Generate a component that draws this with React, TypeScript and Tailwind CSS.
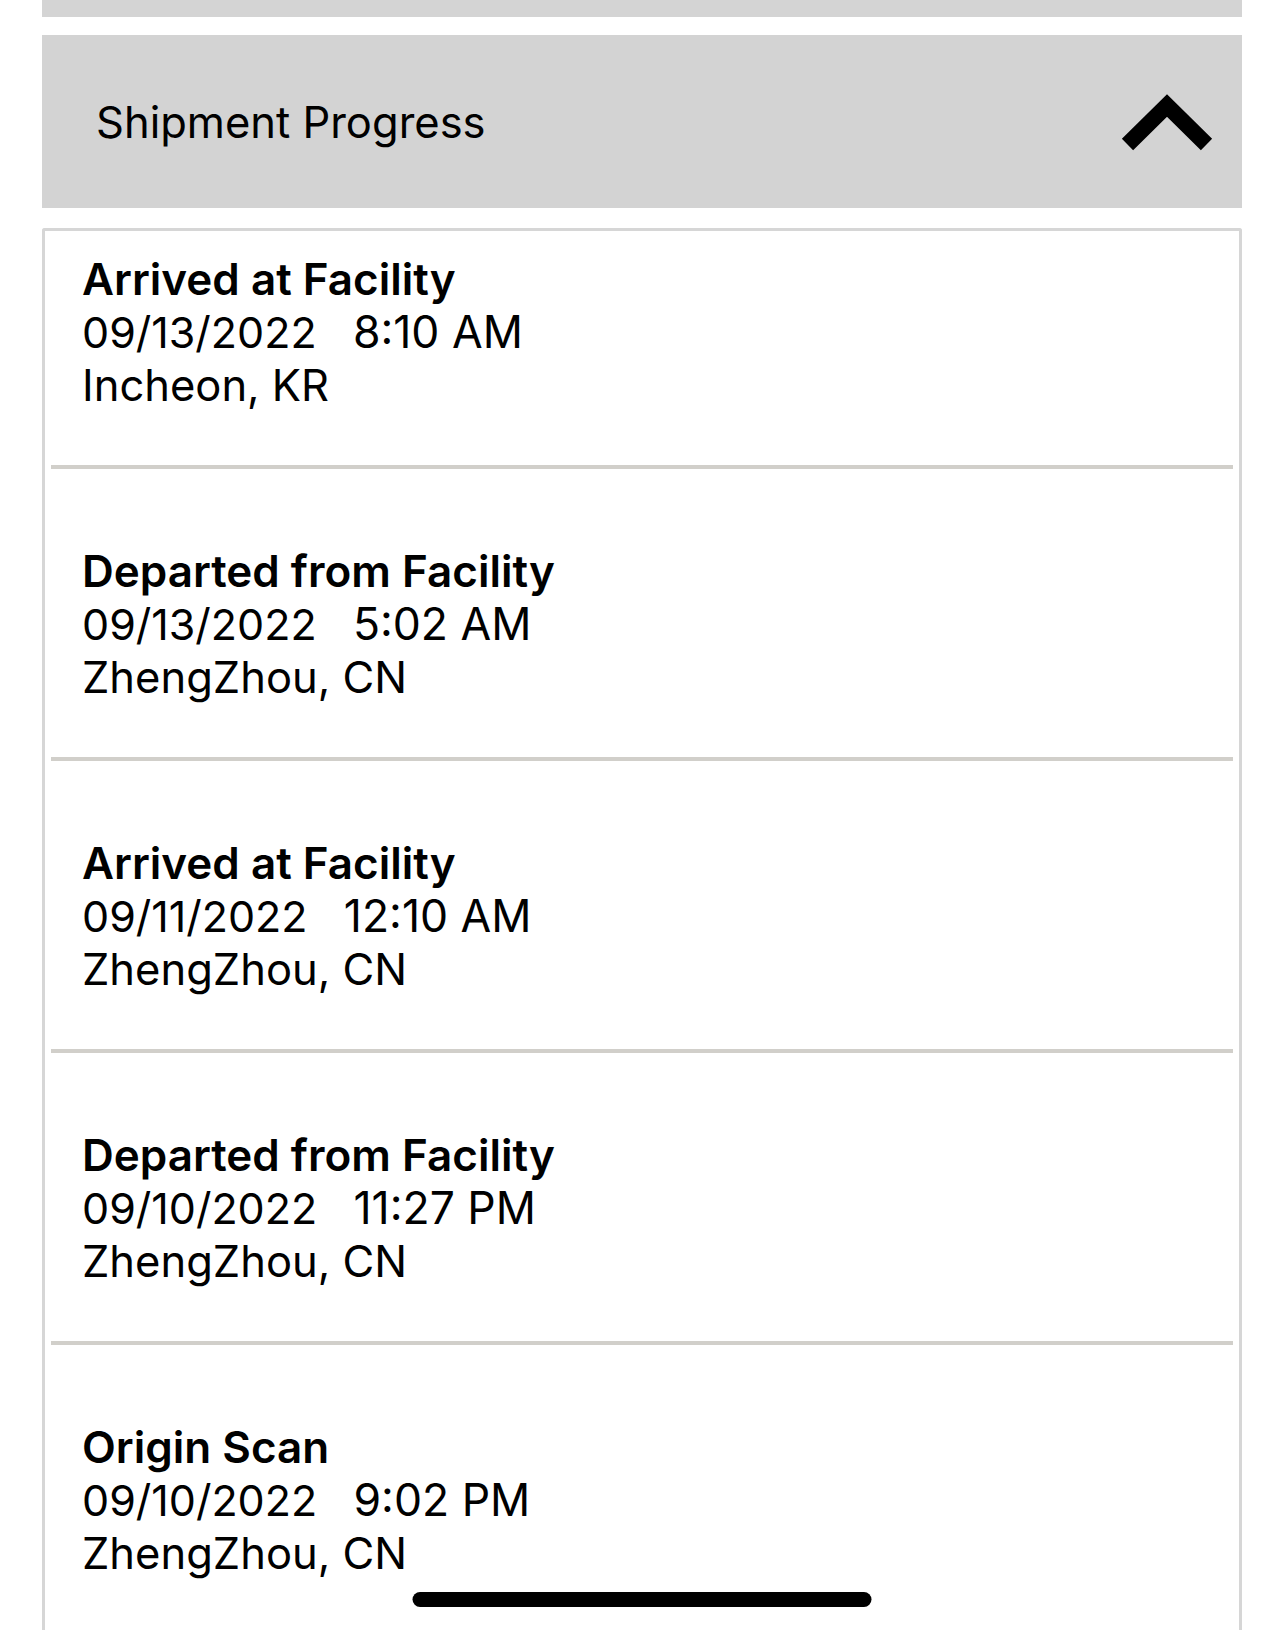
import React from "react";

type Ev = { title: string; date: string; time: string; place: string };

const events: Ev[] = [
  { title: "Arrived at Facility", date: "09/13/2022", time: "8:10 AM", place: "Incheon, KR" },
  { title: "Departed from Facility", date: "09/13/2022", time: "5:02 AM", place: "ZhengZhou, CN" },
  { title: "Arrived at Facility", date: "09/11/2022", time: "12:10 AM", place: "ZhengZhou, CN" },
  { title: "Departed from Facility", date: "09/10/2022", time: "11:27 PM", place: "ZhengZhou, CN" },
  { title: "Origin Scan", date: "09/10/2022", time: "9:02 PM", place: "ZhengZhou, CN" },
];

export default function App() {
  return (
    <div
      className="min-h-[1630px] bg-white text-black overflow-hidden"
      style={{ fontFamily: 'Inter, "Noto Sans", "Liberation Sans", sans-serif' }}
    >
      <div className="mx-[42px] flex flex-col">
        <div className="h-[17px] bg-[#d4d4d4]" />
        <div className="mt-[18px] h-[173px] bg-[#d3d3d3] flex items-center justify-between pl-[54px] pr-[31px]">
          <span className="text-[43.5px] leading-[52px] font-normal text-black">Shipment Progress</span>
          <svg width="89" height="57" viewBox="0 0 89 57" overflow="visible" aria-hidden="true">
            <polyline
              points="5.5,51.5 45,12.5 84.5,51.5"
              fill="none"
              stroke="#000"
              strokeWidth="16"
              strokeLinejoin="miter"
              strokeLinecap="butt"
            />
          </svg>
        </div>
        <div className="mt-[20px] border-[3px] border-b-0 border-[#d6d6d6] rounded-t-[3px] flex flex-col">
          {events.map((e, i) => (
            <div key={i} className="flex flex-col">
              <div className={`pl-[37px] pb-[53px] ${i === 0 ? "pt-[22px]" : "pt-[76px]"}`}>
                <div className="text-[44px] leading-[53px] font-semibold">{e.title}</div>
                <div className="text-[43px] leading-[53px] font-normal whitespace-pre">
                  {e.date + "   "}
                  <span className="text-[44.5px]">{e.time}</span>
                </div>
                <div className="text-[43.5px] leading-[53px] font-normal">{e.place}</div>
              </div>
              {i < events.length - 1 && <div className="mx-[6px] h-[4px] bg-[#d1cfca]" />}
            </div>
          ))}
        </div>
      </div>
      <div className="fixed left-1/2 -translate-x-1/2 bottom-[23px] w-[459px] h-[15px] rounded-full bg-black" />
    </div>
  );
}
